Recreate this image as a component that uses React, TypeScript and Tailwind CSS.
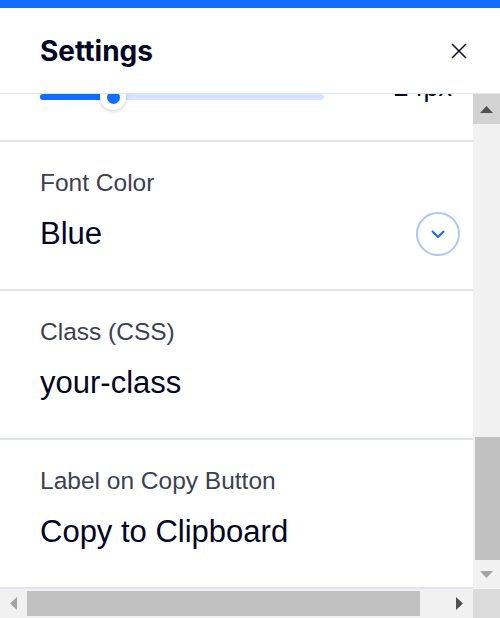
import React from "react";

const navy = "text-[#000624]";

function Field({ label, value, dropdown }: { label: string; value: string; dropdown?: boolean }) {
  return (
    <div className="w-[500px] shrink-0 border-t-2 border-[#dfe5eb] px-[40px] pt-[26px] pb-[36px]">
      <div className="text-[24.5px] leading-[30px] text-[#3b3f52]">{label}</div>
      <div className="mt-[17px] flex h-[38px] items-center justify-between">
        <span className={`text-[31px] leading-[38px] ${navy}`}>{value}</span>
        {dropdown && (
          <span className="flex h-[44px] w-[44px] items-center justify-center rounded-full border-2 border-[#a8c7fc]">
            <svg width="14" height="8" viewBox="0 0 14 8" fill="none">
              <path d="M1 1L7 7L13 1" stroke="#116dff" strokeWidth="2" />
            </svg>
          </span>
        )}
      </div>
    </div>
  );
}

const Arrow = ({ dir, color }: { dir: "up" | "down" | "left" | "right"; color: string }) => {
  const pts = {
    up: "0,7 6.5,0 13,7",
    down: "0,0 13,0 6.5,7",
    left: "7,0 7,13 0,6.5",
    right: "0,0 7,6.5 0,13",
  }[dir];
  const vertical = dir === "up" || dir === "down";
  return (
    <svg width={vertical ? 13 : 7} height={vertical ? 7 : 13}>
      <polygon points={pts} fill={color} />
    </svg>
  );
};

export default function App() {
  return (
    <div className="flex h-[618px] w-[500px] flex-col overflow-hidden bg-white font-['Liberation_Sans',Arial,sans-serif]">
      <div className="h-[8px] shrink-0 bg-[#116dff]" />
      <div className="flex h-[86px] shrink-0 items-center justify-between border-b border-[#dfe5eb] pl-[40px] pr-[33px]">
        <h1 className={`font-['Inter',sans-serif] text-[28px] leading-[34px] font-bold ${navy}`}>Settings</h1>
        <svg width="16" height="16" viewBox="0 0 16 16" fill="none">
          <path d="M1 1L15 15M15 1L1 15" stroke="#0b0d24" strokeWidth="1.5" />
        </svg>
      </div>

      <div className="grid min-h-0 flex-1 grid-cols-[473px_27px] grid-rows-[495px_29px]">
        {/* content viewport, scrolled to bottom */}
        <div className="flex flex-col justify-end overflow-hidden">
          <div className="w-[500px] shrink-0 px-[40px] pt-[20px] pb-[30px]">
            <div className="flex h-[26px] items-center">
              <div className="relative h-[6px] w-[284px] rounded-full bg-[#d6e5fd]">
                <div className="h-full w-[73px] rounded-full bg-[#116dff]" />
                <span className="absolute left-[60px] top-[-10px] flex h-[26px] w-[26px] items-center justify-center rounded-full bg-white shadow-[0_1px_4px_rgba(0,0,0,0.2)]">
                  <span className="h-[13px] w-[13px] rounded-full bg-[#116dff]" />
                </span>
              </div>
              <span className={`mb-[20px] ml-auto mr-[8px] text-[27px] leading-[26px] ${navy}`}>24px</span>
            </div>
          </div>
          <Field label="Font Color" value="Blue" dropdown />
          <Field label="Class (CSS)" value="your-class" />
          <div className="shrink-0 border-b-2 border-[#dfe5eb]">
            <Field label="Label on Copy Button" value="Copy to Clipboard" />
          </div>
        </div>

        {/* vertical scrollbar */}
        <div className="flex flex-col bg-[#f1f1f1]">
          <div className="flex h-[30px] items-center justify-center bg-[#d2d2d2]">
            <Arrow dir="up" color="#505050" />
          </div>
          <div className="flex flex-1 flex-col justify-end pl-[2px]">
            <div className="h-[123px] bg-[#c1c1c1]" />
          </div>
          <div className="flex h-[29px] items-center justify-center">
            <Arrow dir="down" color="#a3a3a3" />
          </div>
        </div>

        {/* horizontal scrollbar */}
        <div className="flex items-center bg-[#f1f1f1]">
          <div className="flex h-full w-[27px] items-center justify-center">
            <Arrow dir="left" color="#a3a3a3" />
          </div>
          <div className="h-[25px] w-[393px] bg-[#c1c1c1]" />
          <div className="ml-auto flex h-full w-[27px] items-center justify-center">
            <Arrow dir="right" color="#505050" />
          </div>
        </div>
        <div className="bg-[#dcdcdc]" />
      </div>
    </div>
  );
}
